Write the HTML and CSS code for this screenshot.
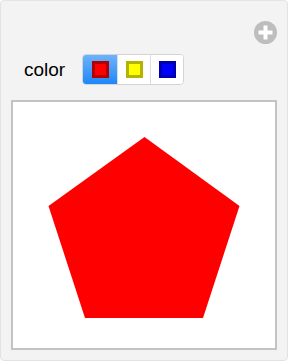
FILE: index.html
```html
<!DOCTYPE html>
<html lang="en">
<head>
    <meta charset="UTF-8">
    <meta name="viewport" content="width=device-width, initial-scale=1.0">
    <title>Manipulate - color</title>
    <link rel="stylesheet" href="styles.css">
</head>
<body>

<div class="panel">
    <div class="panel-top">
        <!-- botao de adicionar -->
        <svg class="add-btn" width="23" height="23" viewBox="0 0 23 23">
            <circle cx="11.5" cy="11.5" r="11.5" fill="#bdbdbd"/>
            <rect x="9.5" y="4.5" width="4" height="14" fill="#ffffff"/>
            <rect x="4.5" y="9.5" width="14" height="4" fill="#ffffff"/>
        </svg>
    </div>

    <div class="controls">
        <span class="label">color</span>
        <div class="seg">
            <button class="seg-item active"><span class="swatch red"></span></button>
            <button class="seg-item"><span class="swatch yellow"></span></button>
            <button class="seg-item"><span class="swatch blue"></span></button>
        </div>
    </div>

    <div class="view">
        <svg width="262" height="246" viewBox="0 0 262 246">
            <polygon points="131.5,35 226.5,104 190,216 72,216 35.5,104" fill="#ff0000"/>
        </svg>
    </div>
</div>

</body>
</html>
```

FILE: styles.css
```css
body {
    margin: 0;
    font-family: "Liberation Sans", Arial, sans-serif;
    background-color: #ffffff;
}
.panel {
    width: 266px;
    padding: 20px 10px 10px 10px;
    background-color: #f3f3f3;
    border: 1px solid #e3e3e3;
    border-radius: 4px;
}
.panel-top {
    display: flex;
    justify-content: flex-end;
    height: 23px;
}
.add-btn {
    display: block;
}
.controls {
    display: flex;
    align-items: center;
    margin-top: 10px;
    height: 31px;
    padding-left: 13px;
}
.label {
    font-size: 19px;
    color: #000000;
    width: 58px;
}
.seg {
    display: flex;
    height: 31px;
    border: 1px solid #d4d4d4;
    border-radius: 4px;
    overflow: hidden;
    background-color: #ffffff;
    box-sizing: border-box;
}
.seg-item {
    width: 33px;
    height: 100%;
    border: none;
    border-left: 1px solid #dcdcdc;
    background-color: #ffffff;
    padding: 0;
    display: flex;
    align-items: center;
    justify-content: center;
}
.seg-item:first-child {
    border-left: none;
    width: 34px;
}
.seg-item.active {
    background: linear-gradient(#6db3fc, #1f87f8);
}
.swatch {
    width: 11px;
    height: 11px;
    border: 3px solid;
    display: block;
}
.red {
    background-color: #ff0000;
    border-color: #b20000;
}
.yellow {
    background-color: #ffff00;
    border-color: #b3b300;
}
.blue {
    background-color: #0000ff;
    border-color: #0000b3;
}
.view {
    margin-top: 15px;
    width: 262px;
    height: 246px;
    border: 2px solid #c3c3c3;
    background-color: #ffffff;
}
.view svg {
    display: block;
}
```
